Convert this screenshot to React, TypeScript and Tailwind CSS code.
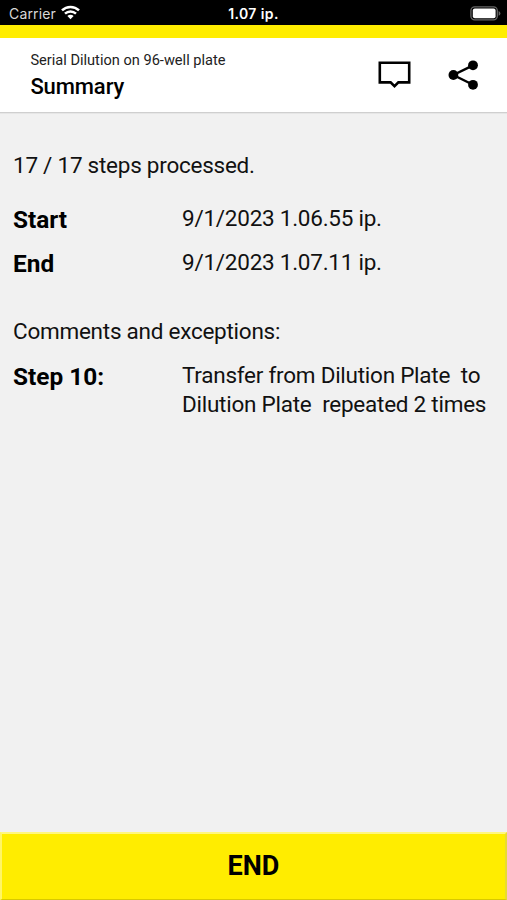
import React from "react";

function StatusBar() {
  return (
    <div className="grid h-[25px] shrink-0 grid-cols-3 items-center bg-black font-['Inter',sans-serif] text-white">
      <div className="flex items-center gap-[5px] pl-[9px] pt-[3px]">
        <span className="text-[14px] leading-[20px] tracking-[0.15px] text-[#d8d8d8]">Carrier</span>
        <svg className="-mt-[3px]" width="19" height="15" viewBox="0 0 19 15" fill="none" stroke="white" strokeWidth="2.5">
          <path d="M1 5.4 A12.2 12.2 0 0 1 18 5.4" />
          <path d="M4 8.6 A8 8 0 0 1 15 8.6" />
          <path d="M9.5 14.2 L6.4 11 A4.4 4.4 0 0 1 12.6 11 Z" fill="white" stroke="none" />
        </svg>
      </div>
      <div className="pt-[3px] text-center text-[14px] font-semibold leading-[20px] tracking-[0.4px]">1.07 ip.</div>
      <div className="flex justify-end pr-[6px] pt-px">
        <svg width="31" height="15" viewBox="0 0 31 15">
          <rect x="0.9" y="0.9" width="26.4" height="13" rx="3.8" fill="black" stroke="#666" strokeWidth="1.3" />
          <rect x="2.8" y="2.6" width="22.8" height="9.6" rx="2" fill="white" />
          <path d="M28.6 5 Q30.4 5.8 30.4 7.4 Q30.4 9 28.6 9.8 Z" fill="#666" />
        </svg>
      </div>
    </div>
  );
}

function Header() {
  return (
    <header className="flex h-[75px] shrink-0 items-start justify-between border-b border-[#cfcfcf] bg-white pl-[30px] pr-[28px] shadow-[0_1px_0_#e6e6e6]">
      <div className="pl-[0.4px] pt-[14px]">
        <div className="text-[14.6px] leading-[17px] text-[#222]">Serial Dilution on 96-well plate</div>
        <h1 className="mt-[5px] text-[22px] font-medium leading-[26px] tracking-[-0.1px]">Summary</h1>
      </div>
      <div className="flex gap-[37px] pt-[22px]">
        <svg width="33" height="30" viewBox="0 0 33 30" fill="none" stroke="black" strokeWidth="2.6">
          <path d="M1.8 2.8 H31.2 V22.4 H20.4 L16.5 26.2 L12.6 22.4 H1.8 Z" />
        </svg>
        <svg width="31" height="30" viewBox="0 0 31 30" fill="black" stroke="black">
          <path d="M25 5.3 L5.4 15 L25 24.8" fill="none" strokeWidth="2.4" />
          <circle cx="25" cy="5.3" r="4.9" stroke="none" />
          <circle cx="5.4" cy="15" r="4.9" stroke="none" />
          <circle cx="25" cy="24.8" r="4.9" stroke="none" />
        </svg>
      </div>
    </header>
  );
}

function Row({ label, children }: { label: string; children: React.ReactNode }) {
  return (
    <div className="flex">
      <div className="w-[169px] shrink-0 pt-px text-[24.4px] font-bold tracking-normal text-black">{label}</div>
      <div className="whitespace-pre">{children}</div>
    </div>
  );
}

export default function App() {
  return (
    <div className="flex h-[900px] w-[507px] flex-col overflow-hidden bg-[#f1f1f1] font-['Roboto',sans-serif] text-black">
      <StatusBar />
      <div className="h-[13px] shrink-0 bg-[#ffed00]" />
      <Header />
      <main className="flex grow flex-col pl-[13px] pt-[38px] text-[22.5px] leading-[29px] tracking-[-0.25px] text-[#111]">
        <p>17 / 17 steps processed.</p>
        <div className="mt-[24px] flex flex-col gap-[14px]">
          <Row label="Start">9/1/2023 1.06.55 ip.</Row>
          <Row label="End">9/1/2023 1.07.11 ip.</Row>
        </div>
        <p className="mt-[39px]">Comments and exceptions:</p>
        <div className="mt-[15px]">
          <Row label="Step 10:">{"Transfer from Dilution Plate  to\nDilution Plate  repeated 2 times"}</Row>
        </div>
      </main>
      <button className="h-[68px] shrink-0 border-2 border-b border-t-[#fff780] border-l-[#fff566] border-r-[#e8dc30] border-b-[#d8c800] bg-[#ffed00] text-[27px] font-bold">
        END
      </button>
    </div>
  );
}
